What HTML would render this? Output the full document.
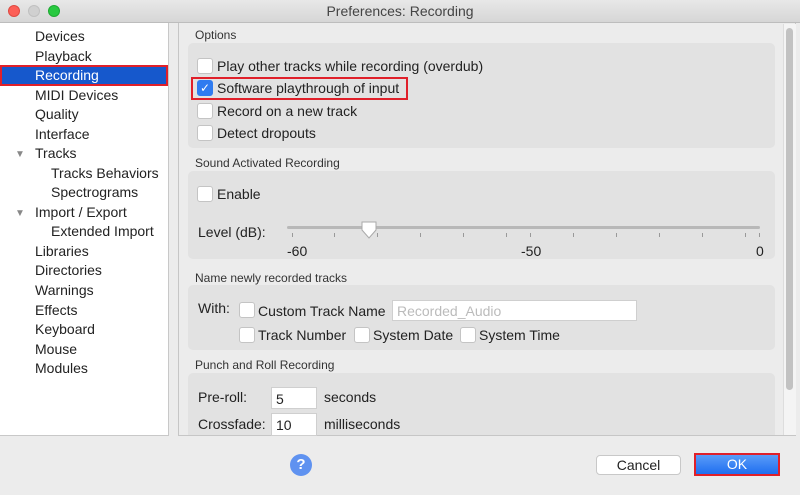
<!DOCTYPE html><html><head><style>
*{box-sizing:border-box;margin:0;padding:0}
body{width:800px;height:495px;background:#ececec;font-family:"Liberation Sans",sans-serif;position:relative;overflow:hidden;color:#222}
.a{position:absolute}
.tb{left:0;top:0;width:800px;height:23px;background:linear-gradient(#e8e8e8,#d6d6d6);border-bottom:1px solid #bdbdbd;text-align:center;font-size:14px;line-height:23px;color:#444}
.dot{width:12px;height:12px;border-radius:50%;top:5px}
.side{left:0;top:23px;width:169px;height:413px;background:#fff;border-right:1px solid #c8c8c8;border-bottom:1px solid #c8c8c8}
.si{position:absolute;font-size:14px;left:35px;line-height:18px}
.main{left:178px;top:23px;width:618px;height:413px;background:#ececec;border:1px solid #c6c6c6;border-top:none}
.grp{position:absolute;left:188px;width:587px;background:#e2e2e2;border-radius:5px}
.lbl{position:absolute;font-size:12px;color:#333}
.t{position:absolute;font-size:14px;line-height:18px}
.cb{position:absolute;width:16px;height:16px;background:#fff;border:1px solid #c4c4c4;border-radius:3px}
.in{position:absolute;background:#fff;border:1px solid #cfcfcf;font-size:14px;padding-left:4px}
.tk{position:absolute;top:233px;width:1px;height:4px;background:#999}
</style></head><body>
<div class="a tb">Preferences: Recording</div>
<div class="a dot" style="left:8px;background:#fc5f57;border:1px solid #de4a42"></div>
<div class="a dot" style="left:28px;background:#d0d0d0;border:1px solid #c0c0c0"></div>
<div class="a dot" style="left:48px;background:#28c940;border:1px solid #1ea932"></div>
<div class="a side"></div>
<div class="a" style="left:0;top:65px;width:168px;height:21px;background:#1658cc;border:2px solid #e0202a"></div>
<div class="si" style="top:27px">Devices</div>
<div class="si" style="top:47px">Playback</div>
<div class="si" style="top:66px;color:#fff">Recording</div>
<div class="si" style="top:86px">MIDI Devices</div>
<div class="si" style="top:105px">Quality</div>
<div class="si" style="top:125px">Interface</div>
<div class="si" style="top:144px">Tracks</div>
<div class="si" style="top:164px;left:51px">Tracks Behaviors</div>
<div class="si" style="top:183px;left:51px">Spectrograms</div>
<div class="si" style="top:203px">Import / Export</div>
<div class="si" style="top:222px;left:51px">Extended Import</div>
<div class="si" style="top:242px">Libraries</div>
<div class="si" style="top:261px">Directories</div>
<div class="si" style="top:281px">Warnings</div>
<div class="si" style="top:301px">Effects</div>
<div class="si" style="top:320px">Keyboard</div>
<div class="si" style="top:340px">Mouse</div>
<div class="si" style="top:359px">Modules</div>
<div class="si" style="top:146px;left:15px;font-size:10px;color:#888">▼</div>
<div class="si" style="top:205px;left:15px;font-size:10px;color:#888">▼</div>
<div class="a main"></div>
<div class="a" style="left:783px;top:24px;width:13px;height:411px;background:#f4f4f4;border-left:1px solid #ddd"></div>
<div class="a" style="left:786px;top:28px;width:7px;height:362px;background:#c2c2c2;border-radius:4px"></div>
<div class="lbl" style="left:195px;top:28px">Options</div>
<div class="grp" style="top:43px;height:105px"></div>
<div class="cb" style="left:197px;top:58px"></div><div class="t" style="left:217px;top:57px">Play other tracks while recording (overdub)</div>
<div class="a" style="left:191px;top:77px;width:217px;height:23px;border:2px solid #e0202a"></div>
<div class="cb" style="left:197px;top:80px;background:#2f7bf0;border-color:#2f7bf0;color:#fff;font-size:12px;line-height:14px;text-align:center">✓</div><div class="t" style="left:217px;top:79px">Software playthrough of input</div>
<div class="cb" style="left:197px;top:103px"></div><div class="t" style="left:217px;top:102px">Record on a new track</div>
<div class="cb" style="left:197px;top:125px"></div><div class="t" style="left:217px;top:124px">Detect dropouts</div>
<div class="lbl" style="left:195px;top:156px">Sound Activated Recording</div>
<div class="grp" style="top:171px;height:88px"></div>
<div class="cb" style="left:197px;top:186px"></div><div class="t" style="left:217px;top:185px">Enable</div>
<div class="t" style="left:198px;top:223px">Level (dB):</div>
<div class="a" style="left:287px;top:226px;width:473px;height:3px;background:#b8b8b8;border-radius:2px"></div>
<div class="tk" style="left:292px"></div><div class="tk" style="left:334px"></div><div class="tk" style="left:377px"></div><div class="tk" style="left:420px"></div><div class="tk" style="left:463px"></div><div class="tk" style="left:506px"></div><div class="tk" style="left:530px"></div><div class="tk" style="left:573px"></div><div class="tk" style="left:616px"></div><div class="tk" style="left:659px"></div><div class="tk" style="left:702px"></div><div class="tk" style="left:745px"></div><div class="tk" style="left:759px"></div>
<svg class="a" style="left:360px;top:220px" width="20" height="20"><path d="M2 2h14v8l-7 8l-7-8z" fill="#fff" stroke="#aaa"/></svg>
<div class="t" style="left:287px;top:242px">-60</div>
<div class="t" style="left:521px;top:242px">-50</div>
<div class="t" style="left:756px;top:242px">0</div>
<div class="lbl" style="left:195px;top:271px">Name newly recorded tracks</div>
<div class="grp" style="top:285px;height:65px"></div>
<div class="t" style="left:198px;top:299px">With:</div>
<div class="cb" style="left:239px;top:302px"></div><div class="t" style="left:258px;top:302px">Custom Track Name</div>
<div class="in" style="left:392px;top:300px;width:245px;height:21px;color:#bbb;line-height:20px">Recorded_Audio</div>
<div class="cb" style="left:239px;top:327px"></div><div class="t" style="left:258px;top:326px">Track Number</div>
<div class="cb" style="left:354px;top:327px"></div><div class="t" style="left:373px;top:326px">System Date</div>
<div class="cb" style="left:460px;top:327px"></div><div class="t" style="left:479px;top:326px">System Time</div>
<div class="lbl" style="left:195px;top:358px">Punch and Roll Recording</div>
<div class="grp" style="top:373px;height:62px;border-radius:5px 5px 0 0"></div>
<div class="t" style="left:198px;top:388px">Pre-roll:</div>
<div class="in" style="left:271px;top:387px;width:46px;height:22px;line-height:22px">5</div>
<div class="t" style="left:324px;top:388px">seconds</div>
<div class="t" style="left:198px;top:415px">Crossfade:</div>
<div class="in" style="left:271px;top:413px;width:46px;height:23px;line-height:23px">10</div>
<div class="t" style="left:324px;top:415px">milliseconds</div>
<div class="a" style="left:290px;top:454px;width:22px;height:22px;border-radius:50%;background:#5f92f0;color:#fff;font-weight:bold;font-size:15px;text-align:center;line-height:22px">?</div>
<div class="a" style="left:596px;top:455px;width:85px;height:20px;background:#fff;border:1px solid #c8c8c8;border-radius:4px;font-size:14px;text-align:center;line-height:18px">Cancel</div>
<div class="a" style="left:694px;top:453px;width:86px;height:23px;border:2px solid #e0202a;background:linear-gradient(#5a9cf8,#1f6ef0);color:#fff;font-size:14px;text-align:center;line-height:19px">OK</div>
</body></html>
